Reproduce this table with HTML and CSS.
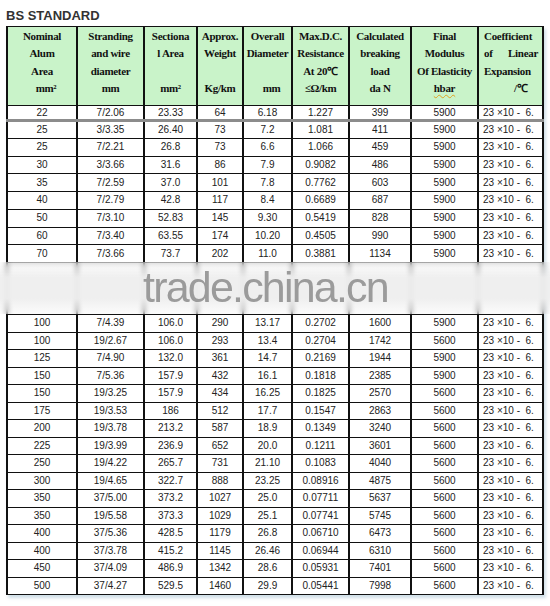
FILE: index.html
```html
<!DOCTYPE html>
<html>
<head>
<meta charset="utf-8">
<link rel="stylesheet" href="styles.css">
</head>
<body>
<div class="page">
  <h1 class="title">BS STANDARD</h1>
  <table class="spec">
    <colgroup>
      <col class="c1"><col class="c2"><col class="c3"><col class="c4"><col class="c5"><col class="c6"><col class="c7"><col class="c8"><col class="c9">
    </colgroup>
    <thead>
      <tr class="head">
        <th><div>Nominal</div><div>Alum</div><div>Area</div><div class="shift">mm²</div></th>
        <th><div>Stranding</div><div>and wire</div><div>diameter</div><div>mm</div></th>
        <th><div>Sectiona</div><div>l Area</div><div>&nbsp;</div><div>mm²</div></th>
        <th><div>Approx.</div><div>Weight</div><div>&nbsp;</div><div>Kg/km</div></th>
        <th><div>Overall</div><div>Diameter</div><div>&nbsp;</div><div class="shift">mm</div></th>
        <th><div>Max.D.C.</div><div>Resistance</div><div>At 20℃</div><div>≤Ω/km</div></th>
        <th><div>Calculated</div><div>breaking</div><div>load</div><div>da N</div></th>
        <th><div>Final</div><div>Modulus</div><div>Of Elasticity</div><div><span class="squiggle">hbar</span></div></th>
        <th class="coef"><div class="left">Coefficient</div><div class="spread"><span>of</span><span>Linear</span></div><div class="left">Expansion</div><div class="unit">/℃</div></th>
      </tr>
    </thead>
    <tbody>
      <tr class="first"><td>22</td><td>7/2.06</td><td>23.33</td><td>64</td><td>6.18</td><td>1.227</td><td>399</td><td>5900</td><td class="exp">23 ×10 -  6.</td></tr>
      <tr class="r1"><td>25</td><td>3/3.35</td><td>26.40</td><td>73</td><td>7.2</td><td>1.081</td><td>411</td><td>5900</td><td class="exp">23 ×10 -  6.</td></tr>
      <tr class="r1"><td>25</td><td>7/2.21</td><td>26.8</td><td>73</td><td>6.6</td><td>1.066</td><td>459</td><td>5900</td><td class="exp">23 ×10 -  6.</td></tr>
      <tr class="r1"><td>30</td><td>3/3.66</td><td>31.6</td><td>86</td><td>7.9</td><td>0.9082</td><td>486</td><td>5900</td><td class="exp">23 ×10 -  6.</td></tr>
      <tr class="r1"><td>35</td><td>7/2.59</td><td>37.0</td><td>101</td><td>7.8</td><td>0.7762</td><td>603</td><td>5900</td><td class="exp">23 ×10 -  6.</td></tr>
      <tr class="r1"><td>40</td><td>7/2.79</td><td>42.8</td><td>117</td><td>8.4</td><td>0.6689</td><td>687</td><td>5900</td><td class="exp">23 ×10 -  6.</td></tr>
      <tr class="r1"><td>50</td><td>7/3.10</td><td>52.83</td><td>145</td><td>9.30</td><td>0.5419</td><td>828</td><td>5900</td><td class="exp">23 ×10 -  6.</td></tr>
      <tr class="r1"><td>60</td><td>7/3.40</td><td>63.55</td><td>174</td><td>10.20</td><td>0.4505</td><td>990</td><td>5900</td><td class="exp">23 ×10 -  6.</td></tr>
      <tr class="r1"><td>70</td><td>7/3.66</td><td>73.7</td><td>202</td><td>11.0</td><td>0.3881</td><td>1134</td><td>5900</td><td class="exp">23 ×10 -  6.</td></tr>
      <tr class="band"><td></td><td></td><td></td><td></td><td></td><td></td><td></td><td></td><td></td></tr>
      <tr class="r2"><td>100</td><td>7/4.39</td><td>106.0</td><td>290</td><td>13.17</td><td>0.2702</td><td>1600</td><td>5900</td><td class="exp">23 ×10 -  6.</td></tr>
      <tr class="r2"><td>100</td><td>19/2.67</td><td>106.0</td><td>293</td><td>13.4</td><td>0.2704</td><td>1742</td><td>5600</td><td class="exp">23 ×10 -  6.</td></tr>
      <tr class="r2"><td>125</td><td>7/4.90</td><td>132.0</td><td>361</td><td>14.7</td><td>0.2169</td><td>1944</td><td>5900</td><td class="exp">23 ×10 -  6.</td></tr>
      <tr class="r2"><td>150</td><td>7/5.36</td><td>157.9</td><td>432</td><td>16.1</td><td>0.1818</td><td>2385</td><td>5900</td><td class="exp">23 ×10 -  6.</td></tr>
      <tr class="r2"><td>150</td><td>19/3.25</td><td>157.9</td><td>434</td><td>16.25</td><td>0.1825</td><td>2570</td><td>5600</td><td class="exp">23 ×10 -  6.</td></tr>
      <tr class="r2"><td>175</td><td>19/3.53</td><td>186</td><td>512</td><td>17.7</td><td>0.1547</td><td>2863</td><td>5600</td><td class="exp">23 ×10 -  6.</td></tr>
      <tr class="r2"><td>200</td><td>19/3.78</td><td>213.2</td><td>587</td><td>18.9</td><td>0.1349</td><td>3240</td><td>5600</td><td class="exp">23 ×10 -  6.</td></tr>
      <tr class="r2"><td>225</td><td>19/3.99</td><td>236.9</td><td>652</td><td>20.0</td><td>0.1211</td><td>3601</td><td>5600</td><td class="exp">23 ×10 -  6.</td></tr>
      <tr class="r2"><td>250</td><td>19/4.22</td><td>265.7</td><td>731</td><td>21.10</td><td>0.1083</td><td>4040</td><td>5600</td><td class="exp">23 ×10 -  6.</td></tr>
      <tr class="r2"><td>300</td><td>19/4.65</td><td>322.7</td><td>888</td><td>23.25</td><td>0.08916</td><td>4875</td><td>5600</td><td class="exp">23 ×10 -  6.</td></tr>
      <tr class="r2"><td>350</td><td>37/5.00</td><td>373.2</td><td>1027</td><td>25.0</td><td>0.07711</td><td>5637</td><td>5600</td><td class="exp">23 ×10 -  6.</td></tr>
      <tr class="r2"><td>350</td><td>19/5.58</td><td>373.3</td><td>1029</td><td>25.1</td><td>0.07741</td><td>5745</td><td>5600</td><td class="exp">23 ×10 -  6.</td></tr>
      <tr class="r2"><td>400</td><td>37/5.36</td><td>428.5</td><td>1179</td><td>26.8</td><td>0.06710</td><td>6473</td><td>5600</td><td class="exp">23 ×10 -  6.</td></tr>
      <tr class="r2"><td>400</td><td>37/3.78</td><td>415.2</td><td>1145</td><td>26.46</td><td>0.06944</td><td>6310</td><td>5600</td><td class="exp">23 ×10 -  6.</td></tr>
      <tr class="r2"><td>450</td><td>37/4.09</td><td>486.9</td><td>1342</td><td>28.6</td><td>0.05931</td><td>7401</td><td>5600</td><td class="exp">23 ×10 -  6.</td></tr>
      <tr class="r2"><td>500</td><td>37/4.27</td><td>529.5</td><td>1460</td><td>29.9</td><td>0.05441</td><td>7998</td><td>5600</td><td class="exp">23 ×10 -  6.</td></tr>
    </tbody>
  </table>
  <div class="watermark"><span>trade.china.cn</span></div>
</div>
</body>
</html>
```

FILE: styles.css
```css
html, body {
  margin: 0;
  padding: 0;
  background: #ffffff;
}

.page {
  position: relative;
  width: 550px;
  height: 606px;
  padding: 8px 0 0 6px;
  box-sizing: border-box;
  overflow: hidden;
}

.title {
  margin: 0 0 3px 0;
  font-family: "Liberation Sans", Arial, sans-serif;
  font-weight: bold;
  font-size: 13px;
  line-height: 15px;
  color: #333333;
  letter-spacing: 0;
}

.spec {
  border-collapse: collapse;
  table-layout: fixed;
  width: 536px;
  box-shadow: 2px 3px 3px rgba(150, 185, 205, 0.45);
}

.c1 { width: 70px; }
.c2 { width: 67px; }
.c3 { width: 53px; }
.c4 { width: 46px; }
.c5 { width: 49px; }
.c6 { width: 57px; }
.c7 { width: 62px; }
.c8 { width: 67px; }
.c9 { width: 65px; }

.spec th,
.spec td {
  border-left: 2px solid #111111;
  border-right: 2px solid #111111;
  border-top: 1px solid #111111;
  border-bottom: 1px solid #111111;
  padding: 0;
  overflow: hidden;
  white-space: nowrap;
}

.head {
  height: 79px;
}

.head th {
  background: #c9f3c9;
  vertical-align: top;
  padding: 1px 1px 0 1px;
  font-family: "Liberation Serif", "Times New Roman", serif;
  font-weight: bold;
  font-size: 11px;
  line-height: 17.3px;
  color: #111111;
  text-align: center;
  letter-spacing: -0.3px;
}

.head th .shift {
  padding-left: 8px;
}

.squiggle {
  text-decoration: underline wavy #e0a020;
  text-decoration-thickness: 1px;
  text-underline-offset: 2px;
}

.head th.coef {
  text-align: left;
  padding: 1px 4px 0 5px;
}

.coef .spread {
  display: flex;
  justify-content: space-between;
}

.coef .unit {
  padding-left: 30px;
}

.spec td {
  font-family: "Liberation Sans", Arial, sans-serif;
  font-size: 10px;
  color: #222222;
  text-align: center;
  vertical-align: middle;
  line-height: 12px;
}

.spec td.exp {
  text-align: left;
  padding-left: 4px;
  white-space: pre;
}

.first {
  height: 15px;
}

.first td {
  border-bottom: 3px solid #8c8c8c;
}

.r1 {
  height: 17.75px;
}

.band {
  height: 52px;
}

.r2 {
  height: 17.5px;
}

.watermark {
  position: absolute;
  left: 0;
  top: 262px;
  width: 550px;
  height: 52px;
  background: linear-gradient(to bottom,
    rgba(246, 246, 246, 0.35) 0%,
    rgba(238, 238, 238, 0.94) 30%,
    rgba(238, 238, 238, 0.94) 70%,
    rgba(246, 246, 246, 0.35) 100%);
  backdrop-filter: blur(2.5px);
  overflow: hidden;
}

.watermark span {
  position: absolute;
  left: 143px;
  top: 1px;
  font-family: "Liberation Sans", Arial, sans-serif;
  font-size: 43px;
  line-height: 48px;
  color: #9b9b9b;
  letter-spacing: -1.8px;
  white-space: nowrap;
}
```
